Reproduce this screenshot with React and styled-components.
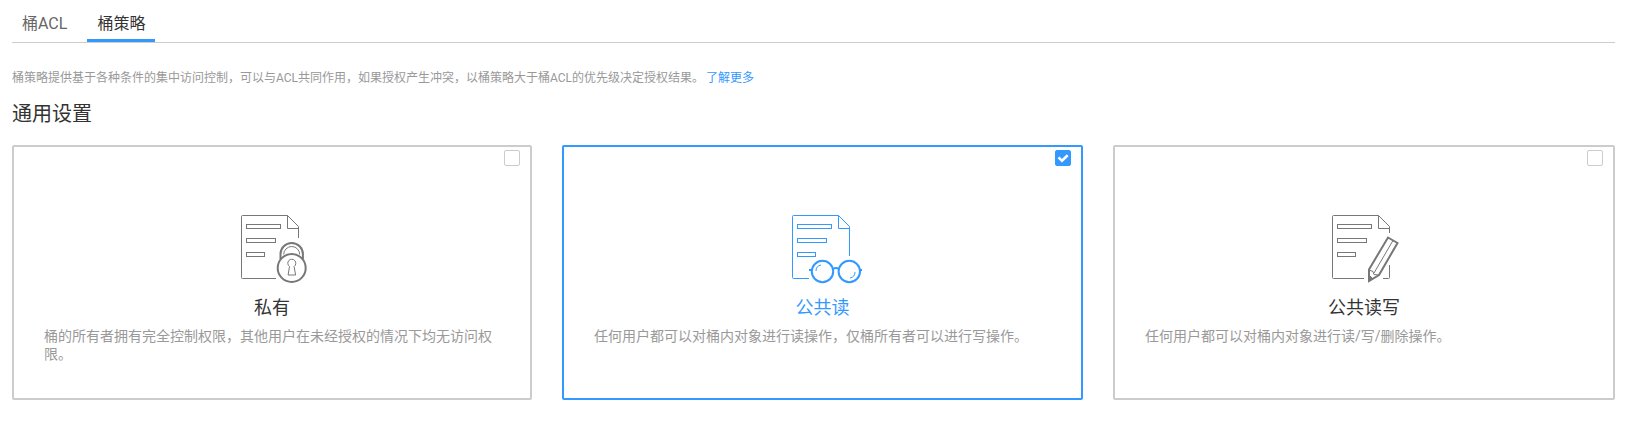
import React from "react";
import styled, { createGlobalStyle } from "styled-components";

const GlobalStyle = createGlobalStyle`
  * { box-sizing: border-box; }
  body {
    margin: 0;
    background: #fff;
    color: #333;
    font-family: Roboto, "Noto Sans CJK SC", sans-serif;
  }
  h2, h3, p { margin: 0; font-weight: 400; }
`;

const Page = styled.main`
  padding: 0 19px 0 12px;
`;

const TabBar = styled.nav`
  display: flex;
  gap: 10px;
  height: 43px;
  border-bottom: 1px solid #ccc;
`;

const Tab = styled.button`
  height: 42px;
  padding: 8px 10px 0;
  border: 0;
  border-bottom: 3px solid ${(p) => (p.$active ? "#3399ff" : "transparent")};
  background: none;
  color: ${(p) => (p.$active ? "#333" : "#666")};
  font: inherit;
  font-size: 16px;
  line-height: 31px;
  white-space: nowrap;
`;

const Notice = styled.p`
  margin-top: 26px;
  color: #999;
  font-size: 12px;
  line-height: 18px;
  white-space: nowrap;
`;

const MoreLink = styled.a`
  margin-left: 2px;
  color: #3399ff;
  text-decoration: none;
`;

const Heading = styled.h2`
  margin-top: 12px;
  font-size: 20px;
  line-height: 30px;
`;

const Cards = styled.div`
  display: grid;
  grid-template-columns: 520px 521px 502px;
  gap: 30px;
  margin-top: 16px;
`;

const CardBox = styled.section`
  display: flex;
  flex-direction: column;
  height: 255px;
  padding: 3px 30px 0;
  border: 2px solid ${(p) => (p.$selected ? "#3399ff" : "#ccc")};
  border-radius: 2px;
`;

const Checkbox = styled.span`
  display: flex;
  align-self: flex-end;
  width: 16px;
  height: 16px;
  margin-right: -20px;
  border: 1px solid ${(p) => (p.$checked ? "#3399ff" : "#ccc")};
  border-radius: 2px;
  background: ${(p) => (p.$checked ? "#3399ff" : "#fff")};
`;

const Icon = styled.svg`
  align-self: center;
  flex: none;
  width: 80px;
  height: 72px;
  margin-top: 46px;
  margin-right: ${(p) => p.$shift || 0}px;
  color: ${(p) => (p.$selected ? "#3399ff" : "#777")};
  fill: none;
  stroke: currentColor;
`;

const CardTitle = styled.h3`
  margin-top: 10px;
  color: ${(p) => (p.$selected ? "#3399ff" : "#333")};
  font-size: 18px;
  line-height: 28px;
  text-align: center;
`;

const CardText = styled.p`
  margin-top: 5px;
  color: #999;
  font-size: 14px;
  line-height: 18px;
`;

function SheetLines() {
  return (
    <>
      <path d="M56.5 3.5v13h11" />
      <rect x="15.5" y="12.5" width="34" height="4" />
      <rect x="15.5" y="26.5" width="29" height="4" />
      <rect x="15.5" y="40.5" width="18" height="4" />
    </>
  );
}

function LockIcon() {
  return (
    <Icon viewBox="0 0 80 72">
      <g transform="translate(-1 0)">
        <path d="M67.5 26V14.5l-11-11H11.5q-1 0-1 1v61q0 1 1 1H45" />
        <SheetLines />
        <path strokeWidth="2" d="M49.5 47V42a11.2 11 0 0 1 22.4 0v5" />
        <path d="M52.7 42.5a8 8 0 0 1 16 0" />
        <circle cx="60.7" cy="56" r="14" strokeWidth="2" fill="#fff" />
        <path d="M58.5 54.5a4 4 0 1 1 4.6 0l1.5 8.5h-7.5z" />
      </g>
    </Icon>
  );
}

function GlassesIcon() {
  return (
    <Icon viewBox="0 0 80 72" $selected $shift={1}>
      <path d="M67.5 44V14.5l-11-11H11.5q-1 0-1 1v61q0 1 1 1H27" />
      <SheetLines />
      <g strokeWidth="2">
        <circle cx="40.5" cy="59.5" r="10.7" />
        <circle cx="67.3" cy="59.5" r="10.7" />
        <path d="M51 57q3-2 6 0M27 58h3M78 58h3" />
      </g>
      <path d="M34 59q0-5 5-6M68 66q5-1 5-6" />
    </Icon>
  );
}

function PencilIcon() {
  return (
    <Icon viewBox="0 0 80 72" $shift={4}>
      <path d="M67.5 21v-6.5l-11-11H11.5q-1 0-1 1v61q0 1 1 1H42M67.5 53v12.5q0 1-1 1H61" />
      <SheetLines />
      <path strokeWidth="2" d="M66 25.5l9.5 5.5L57 63l-10 6V57.5z" />
      <path d="M71 28.5L52 61M47 58l4 1.5 1 3 5 .5" />
      <path fill="currentColor" d="M47 63l4 4-4 2z" />
    </Icon>
  );
}

function AccessCard({ title, children, selected, icon }) {
  return (
    <CardBox $selected={selected}>
      <Checkbox role="checkbox" aria-checked={!!selected} $checked={selected}>
        {selected && (
          <svg width="14" height="14" viewBox="0 0 14 14" fill="none" stroke="#fff" strokeWidth="2.6">
            <path d="M2.5 6.3L6 9.8l5.7-5.5" />
          </svg>
        )}
      </Checkbox>
      {icon}
      <CardTitle $selected={selected}>{title}</CardTitle>
      <CardText>{children}</CardText>
    </CardBox>
  );
}

export default function App() {
  return (
    <>
      <GlobalStyle />
      <Page>
        <TabBar>
          <Tab>桶ACL</Tab>
          <Tab $active>桶策略</Tab>
        </TabBar>
        <Notice>
          桶策略提供基于各种条件的集中访问控制，可以与ACL共同作用，如果授权产生冲突，以桶策略大于桶ACL的优先级决定授权结果。
          <MoreLink>了解更多</MoreLink>
        </Notice>
        <Heading>通用设置</Heading>
        <Cards>
          <AccessCard title="私有" icon={<LockIcon />}>
            桶的所有者拥有完全控制权限，其他用户在未经授权的情况下均无访问权限。
          </AccessCard>
          <AccessCard title="公共读" selected icon={<GlassesIcon />}>
            任何用户都可以对桶内对象进行读操作，仅桶所有者可以进行写操作。
          </AccessCard>
          <AccessCard title="公共读写" icon={<PencilIcon />}>
            任何用户都可以对桶内对象进行读/写/删除操作。
          </AccessCard>
        </Cards>
      </Page>
    </>
  );
}
